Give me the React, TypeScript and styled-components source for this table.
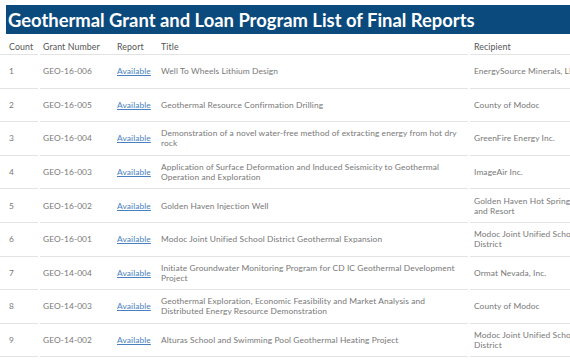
import React from "react";
import styled, { createGlobalStyle } from "styled-components";

const GlobalStyle = createGlobalStyle`
  html, body {
    margin: 0;
    padding: 0;
    background: #ffffff;
    overflow: hidden;
  }
  body {
    font-family: Lato, "Open Sans", sans-serif;
  }
`;

const Page = styled.div`
  width: 570px;
  height: 360px;
  padding-top: 5px;
  box-sizing: border-box;
  overflow: hidden;
`;

const TitleBar = styled.div`
  margin-left: 6px;
  height: 29px;
  width: 600px;
  background: #0b4a7d;
  color: #ffffff;
  font-family: Lato, sans-serif;
  font-weight: 700;
  font-size: 18.4px;
  display: flex;
  align-items: center;
  padding-left: 2px;
  white-space: nowrap;
`;

const Row = styled.div<{ $header?: boolean }>`
  display: grid;
  grid-template-columns: 40px 72px 46px 312px 116px;
  height: ${(p) => (p.$header ? "21px" : "33.6px")};
`;

const Cell = styled.div<{ $pad: number; $gap?: boolean; $header?: boolean }>`
  display: flex;
  align-items: center;
  box-sizing: border-box;
  padding-left: ${(p) => p.$pad}px;
  padding-right: 4px;
  padding-top: ${(p) => (p.$header ? "6px" : "0")};
  margin-right: ${(p) => (p.$gap ? "2px" : "0")};
  border-bottom: 1px solid #e3e3e3;
  font-size: ${(p) => (p.$header ? "8.8px" : "8.4px")};
  line-height: 10px;
  letter-spacing: 0.1px;
  color: ${(p) => (p.$header ? "#555555" : "#787878")};
  overflow: visible;
`;

const Link = styled.a`
  color: #4a7fc0;
  text-decoration: underline;
  cursor: pointer;
`;

type Report = {
  count: number;
  grant: string;
  title: string;
  recipient: string;
};

const reports: Report[] = [
  { count: 1, grant: "GEO-16-006", title: "Well To Wheels Lithium Design", recipient: "EnergySource Minerals, LLC" },
  { count: 2, grant: "GEO-16-005", title: "Geothermal Resource Confirmation Drilling", recipient: "County of Modoc" },
  {
    count: 3,
    grant: "GEO-16-004",
    title: "Demonstration of a novel water-free method of extracting energy from hot dry rock",
    recipient: "GreenFire Energy Inc.",
  },
  {
    count: 4,
    grant: "GEO-16-003",
    title: "Application of Surface Deformation and Induced Seismicity to Geothermal Operation and Exploration",
    recipient: "ImageAir Inc.",
  },
  { count: 5, grant: "GEO-16-002", title: "Golden Haven Injection Well", recipient: "Golden Haven Hot Springs and Resort" },
  {
    count: 6,
    grant: "GEO-16-001",
    title: "Modoc Joint Unified School District Geothermal Expansion",
    recipient: "Modoc Joint Unified School District",
  },
  {
    count: 7,
    grant: "GEO-14-004",
    title: "Initiate Groundwater Monitoring Program for CD IC Geothermal Development Project",
    recipient: "Ormat Nevada, Inc.",
  },
  {
    count: 8,
    grant: "GEO-14-003",
    title:
      "Geothermal Exploration, Economic Feasibility and Market Analysis and Distributed Energy Resource Demonstration",
    recipient: "County of Modoc",
  },
  {
    count: 9,
    grant: "GEO-14-002",
    title: "Alturas School and Swimming Pool Geothermal Heating Project",
    recipient: "Modoc Joint Unified School District",
  },
];

const App: React.FC = () => {
  return (
    <Page>
      <GlobalStyle />
      <TitleBar>Geothermal Grant and Loan Program List of Final Reports</TitleBar>
      <Row $header>
        <Cell $header $pad={9} $gap>Count</Cell>
        <Cell $header $pad={3}>Grant Number</Cell>
        <Cell $header $pad={5}>Report</Cell>
        <Cell $header $pad={3} $gap>Title</Cell>
        <Cell $header $pad={4}>Recipient</Cell>
      </Row>
      {reports.map((r) => (
        <Row key={r.count}>
          <Cell $pad={9} $gap>{r.count}</Cell>
          <Cell $pad={3}>{r.grant}</Cell>
          <Cell $pad={5}>
            <Link>Available</Link>
          </Cell>
          <Cell $pad={3} $gap>{r.title}</Cell>
          <Cell $pad={4}>{r.recipient}</Cell>
        </Row>
      ))}
    </Page>
  );
};

export default App;
